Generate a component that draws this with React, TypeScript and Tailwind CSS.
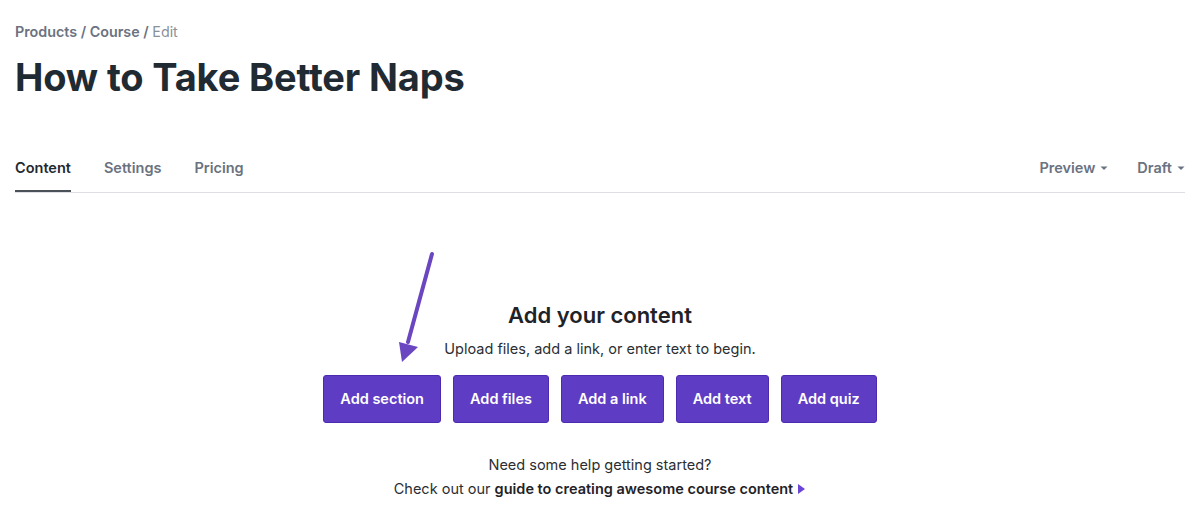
const font = { fontFamily: 'Inter, "Liberation Sans", sans-serif' };

const Caret = () => (
  <svg width="8" height="5" viewBox="0 0 8 5" className="ml-[5px] mt-[2px] inline-block">
    <path d="M0.5 0.5 L4 4 L7.5 0.5 Z" fill="#6b7280" />
  </svg>
);

const buttons = ['Add section', 'Add files', 'Add a link', 'Add text', 'Add quiz'];

export default function App() {
  return (
    <div className="relative h-[511px] w-[1200px] bg-white px-[15px]" style={font}>
      {/* breadcrumb */}
      <div className="pt-[23px] text-[14.3px] leading-[18px] text-[#6b7280]">
        <span className="font-semibold">Products</span>
        <span className="font-semibold"> / </span>
        <span className="font-semibold">Course</span>
        <span className="font-semibold"> / </span>
        <span className="text-[#8a9098]">Edit</span>
      </div>
      <h1 className="mt-[13px] text-[38px] font-bold leading-[46px] tracking-[-0.15px] text-[#1f2a33]">
        How to Take Better Naps
      </h1>

      {/* tabs */}
      <div className="mt-[57px] flex items-end justify-between border-b border-[#dedfe2]">
        <div className="flex gap-[33px] text-[14.5px] font-semibold">
          <div className="border-b-2 border-[#4b5158] pb-[11px] text-[#1f2a33]">Content</div>
          <div className="pb-[11px] text-[#6b7280]">Settings</div>
          <div className="pb-[11px] text-[#6b7280]">Pricing</div>
        </div>
        <div className="flex gap-[29px] pb-[13px] text-[14.5px] font-semibold text-[#6b7280]">
          <div className="flex items-center">
            Preview
            <Caret />
          </div>
          <div className="flex items-center">
            Draft
            <Caret />
          </div>
        </div>
      </div>

      {/* empty state */}
      <div className="mt-[108px] flex flex-col items-center">
        <h2 className="text-[22px] font-semibold leading-[28px] text-[#1f2328]">Add your content</h2>
        <p className="mt-[10px] text-[14.5px] leading-[20px] text-[#2a2e33]">
          Upload files, add a link, or enter text to begin.
        </p>
        <div className="mt-[16px] flex gap-[12px]">
          {buttons.map((b) => (
            <button
              key={b}
              className="h-[48px] rounded-[3px] border border-[#4c2bb0] bg-[#5e3cc3] px-[16px] text-[14.5px] font-semibold text-white"
            >
              {b}
            </button>
          ))}
        </div>
        <p className="mt-[32px] text-[14.5px] leading-[20px] text-[#2a2e33]">Need some help getting started?</p>
        <p className="mt-[4px] flex items-center text-[14.5px] leading-[20px] text-[#2a2e33]">
          Check out our&nbsp;<span className="font-semibold text-[#1f2328]">guide to creating awesome course content</span>
          <svg width="8" height="10" viewBox="0 0 8 10" className="ml-[5px]">
            <path d="M0 0 L7 5 L0 10 Z" fill="#6a45d6" />
          </svg>
        </p>
      </div>

      {/* annotation arrow */}
      <svg className="absolute left-[396px] top-[250px]" width="44" height="116" viewBox="0 0 44 116">
        <line x1="36" y1="4" x2="12" y2="92" stroke="#6b46c1" strokeWidth="4" strokeLinecap="round" />
        <path d="M3 92 L22 97 L6 112 Z" fill="#6b46c1" />
      </svg>
    </div>
  );
}
